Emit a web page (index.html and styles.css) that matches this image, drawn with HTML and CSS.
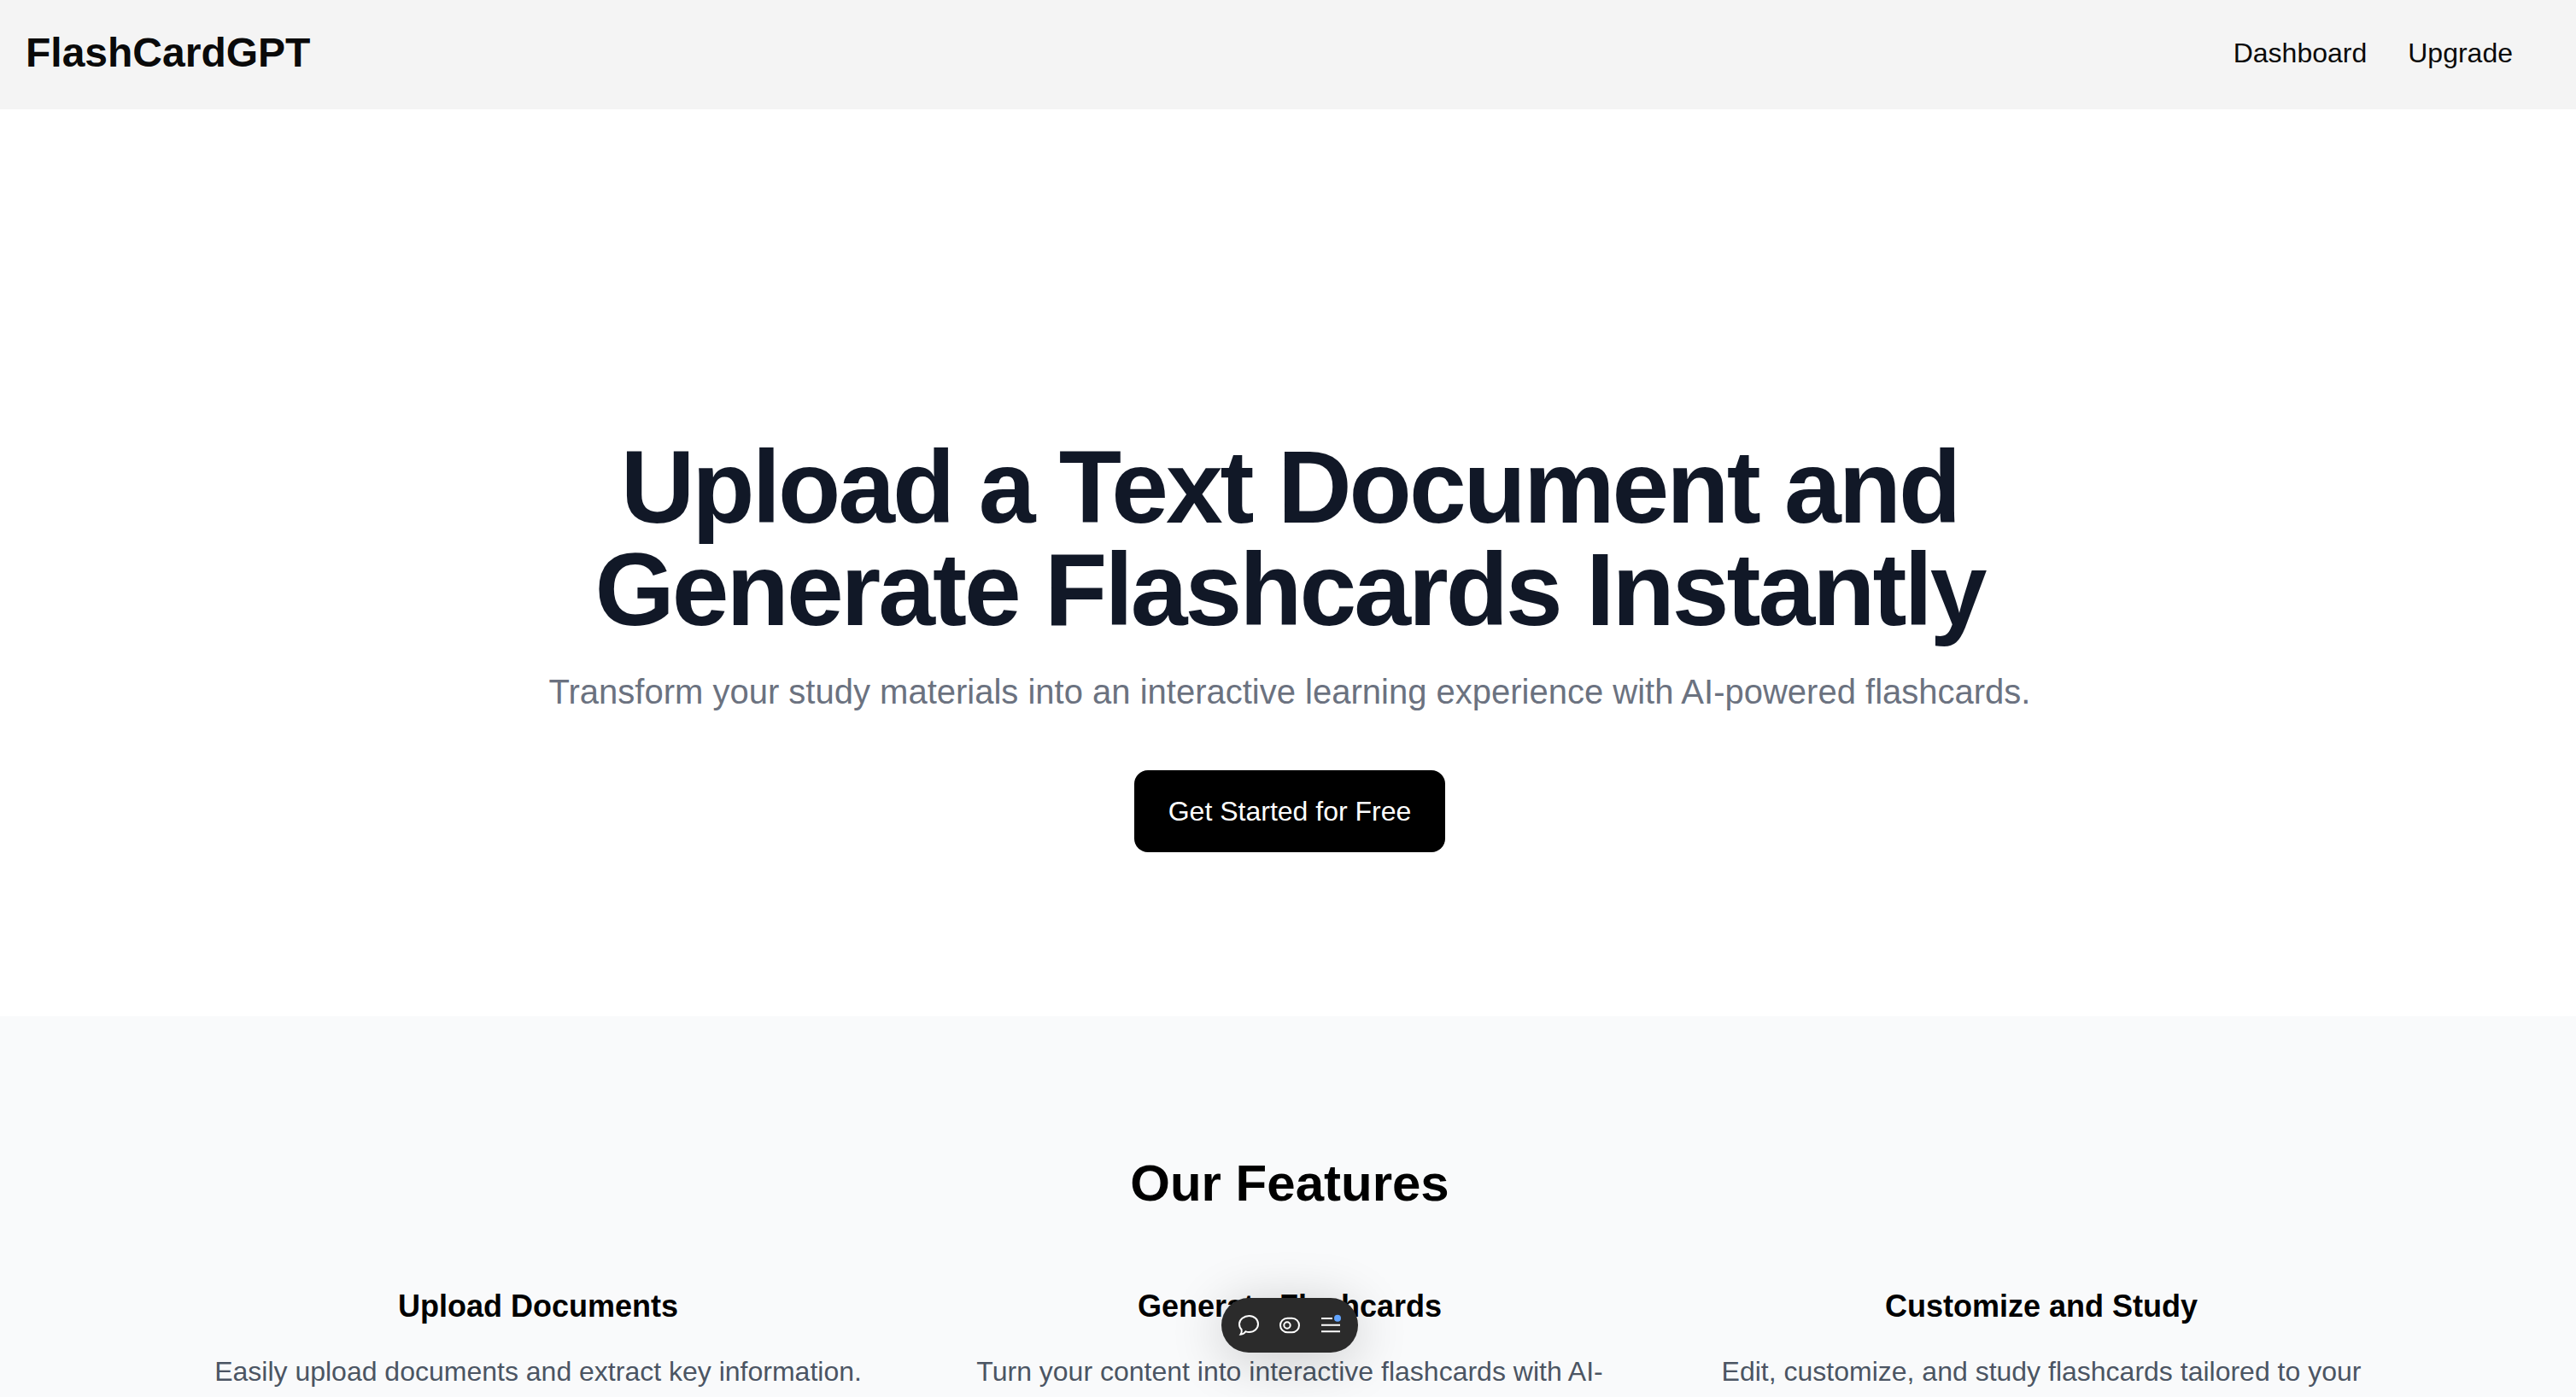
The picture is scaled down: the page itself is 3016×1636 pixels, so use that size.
FILE: index.html
```html
<!DOCTYPE html>
<html lang="en">
<head>
<meta charset="utf-8">
<meta name="viewport" content="width=device-width, initial-scale=1">
<title>FlashCardGPT</title>
<link rel="stylesheet" href="styles.css">
</head>
<body>
<header class="site-header">
  <a class="brand" href="#">FlashCardGPT</a>
  <nav class="site-nav">
    <a href="#">Dashboard</a>
    <a href="#">Upgrade</a>
  </nav>
</header>
<main>
  <section class="hero">
    <h1 class="hero-title">Upload a Text Document and Generate Flashcards Instantly</h1>
    <p class="hero-text">Transform your study materials into an interactive learning experience with AI-powered flashcards.</p>
    <button class="cta" type="button">Get Started for Free</button>
  </section>
  <section class="features">
    <h2 class="features-title">Our Features</h2>
    <div class="feature-grid">
      <article class="feature">
        <h3>Upload Documents</h3>
        <p>Easily upload documents and extract key information.</p>
      </article>
      <article class="feature">
        <h3>Generate Flashcards</h3>
        <p>Turn your content into interactive flashcards with AI-powered technology.</p>
      </article>
      <article class="feature">
        <h3>Customize and Study</h3>
        <p>Edit, customize, and study flashcards tailored to your needs.</p>
      </article>
    </div>
  </section>
</main>
<div class="toolbar" role="toolbar" aria-label="Page tools">
  <button type="button" aria-label="Comment">
    <svg viewBox="0 0 28 28"><path d="M14.500 3C20.500 3 25 7.200 25 12.500S20.500 22 14.500 22c-1.400 0-2.800-.2-4-.7C9 23.500 7 24.500 4.500 24.700c1.300-2 1.600-3.700 1.100-5.700C3.800 17.300 3 15 3 12.500 3 7.200 8.500 3 14.500 3Z"/></svg>
  </button>
  <button type="button" aria-label="Flags">
    <svg viewBox="0 0 28 28"><rect x="3" y="5.700" width="22" height="16.600" rx="8.300"/><circle cx="11" cy="14" r="3.700"/></svg>
  </button>
  <button type="button" aria-label="Menu">
    <svg viewBox="0 0 28 28"><path d="M3 6h13M3 13.700h22M3 21.300h22"/><circle class="dot" cx="22" cy="5.700" r="4"/></svg>
  </button>
</div>
</body>
</html>
```
FILE: styles.css
```css
* { box-sizing: border-box; margin: 0; }
body {
  font-family: "Liberation Sans", Arial, sans-serif;
  font-size: 32px;
  line-height: 48px;
  color: #000;
  background: #fff;
  overflow: hidden;
}
a { color: inherit; text-decoration: none; }
.site-header {
  display: flex;
  align-items: center;
  justify-content: space-between;
  height: 128px;
  padding: 0 74px 4px 30px;
  color: #0a0a0a;
  background: #f4f4f4;
}
.brand { font-size: 48px; font-weight: 700; line-height: 64px; }
.site-nav { display: flex; gap: 48px; }
.hero {
  display: flex;
  flex-direction: column;
  align-items: center;
  padding: 382px 60px 192px 64px;
  text-align: center;
}
.hero-title {
  max-width: 1792px;
  font-size: 120px;
  line-height: 120px;
  letter-spacing: -3px;
  color: #111827;
}
.hero-text { margin-top: 32px; font-size: 40px; line-height: 56px; color: #6b7280; }
.cta {
  margin-top: 64px;
  padding: 24px 40px;
  border: 0;
  border-radius: 16px;
  font: inherit;
  color: #fff;
  background: #000;
}
.features { padding: 160px 60px 160px 64px; background: #f9fafb; }
.features-title { font-size: 60px; line-height: 72px; text-align: center; }
.feature-grid {
  display: grid;
  grid-template-columns: repeat(3, 1fr);
  gap: 80px;
  max-width: 2560px;
  margin: 80px auto 0;
  text-align: center;
}
.feature h3 { font-size: 36px; line-height: 56px; }
.feature p { margin-top: 24px; color: #4b5563; }
.toolbar {
  position: fixed;
  left: 4px;
  right: 0;
  bottom: 52px;
  display: flex;
  width: fit-content;
  margin: 0 auto;
  padding: 8px;
  border-radius: 32px;
  background: #2b2b2b;
  box-shadow: 0 8px 64px rgba(0, 0, 0, .2);
}
.toolbar button {
  display: grid;
  place-items: center;
  width: 48px;
  height: 48px;
  padding: 0;
  border: 0;
  background: none;
}
.toolbar svg { width: 28px; height: 28px; fill: none; stroke: #fff; stroke-width: 2; }
.toolbar .dot { fill: #62a5ff; stroke: none; }
```
